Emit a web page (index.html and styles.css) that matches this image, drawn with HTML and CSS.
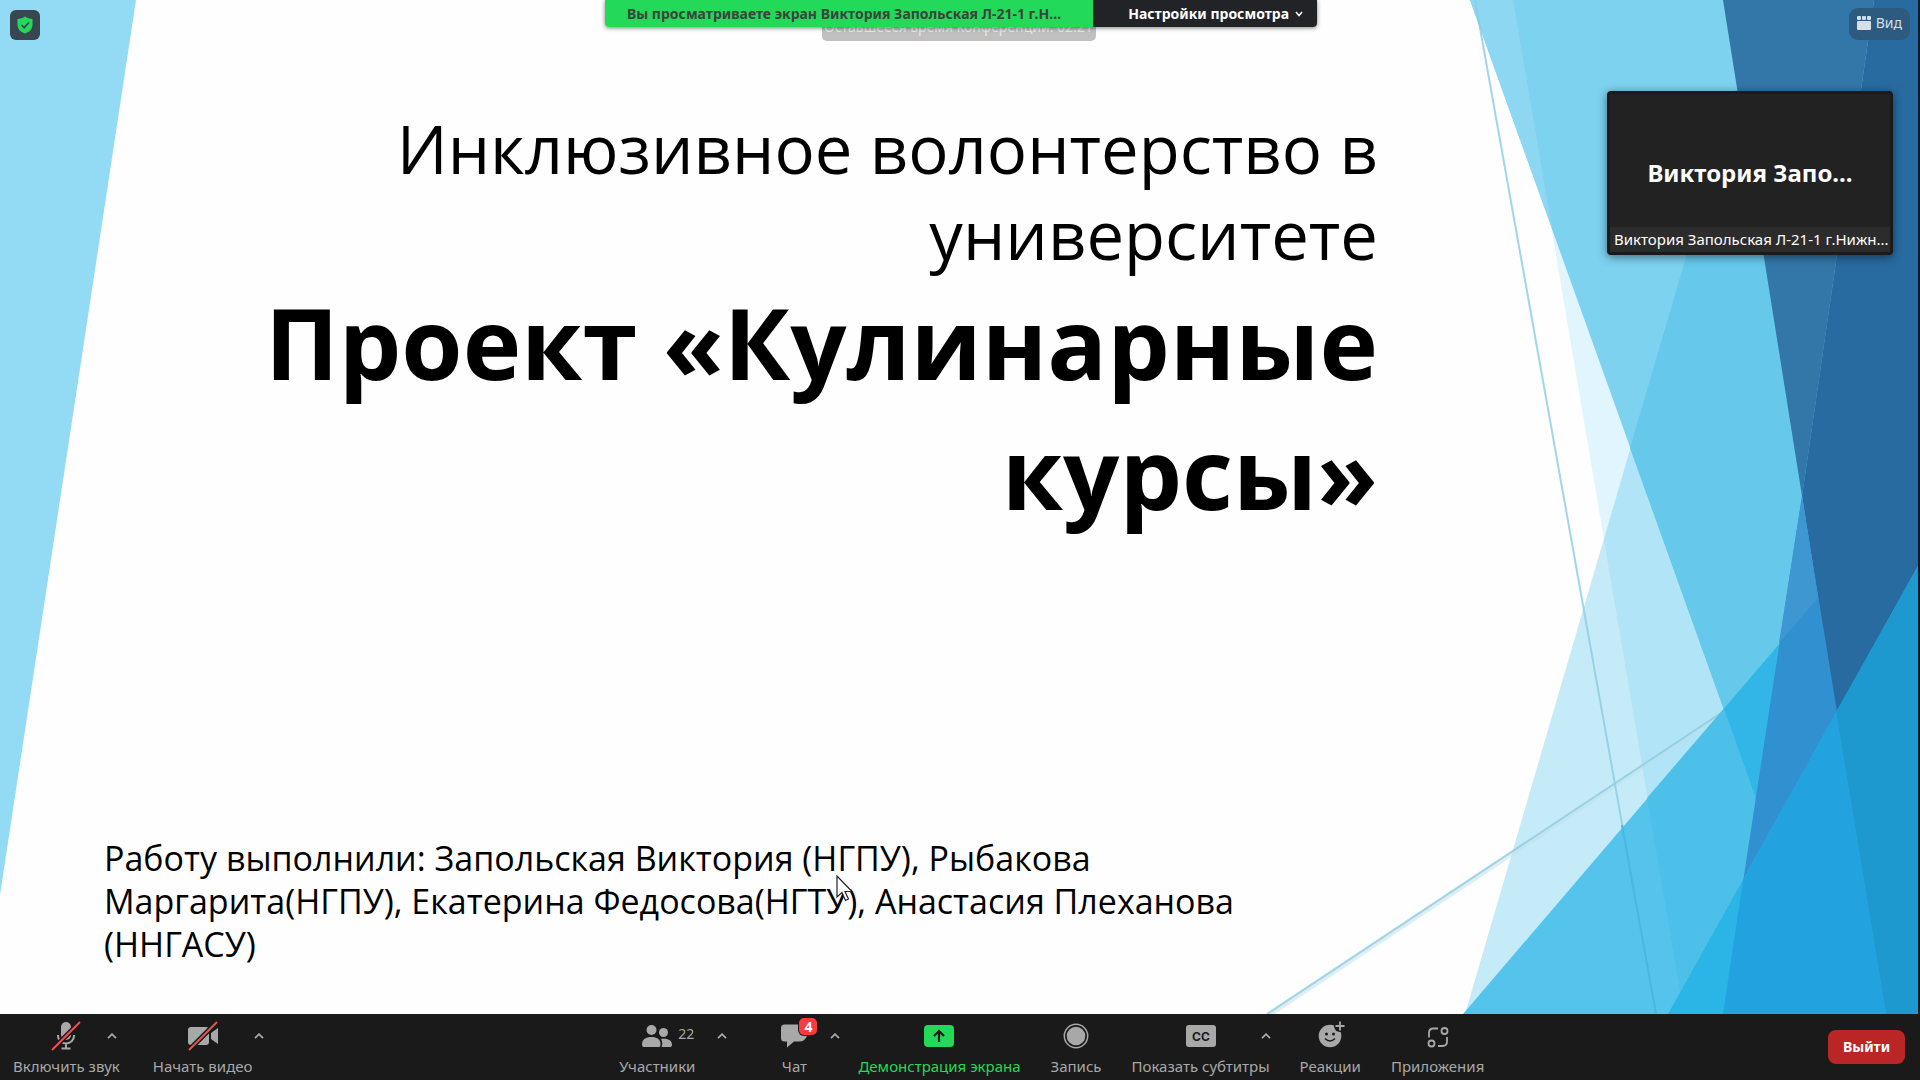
FILE: index.html
```
<!DOCTYPE html>
<html lang="ru">
<head>
  <meta charset="UTF-8">
  <title>Zoom Конференция</title>
  <link rel="stylesheet" href="styles.css">
</head>
<body>
  <main class="stage">
    <svg class="facets" viewBox="0 0 1920 1014" preserveAspectRatio="none" aria-hidden="true">
      <polygon fill="#93daf4" points="0,0 136,0 0,895"/>
      <polygon fill="#e0f5fd" points="1513,0 1684,1014 1918,1014 1918,0"/>
      <polygon fill="#c6ebf8" points="1735,90 1465,1014 1918,1014 1918,90"/>
      <polygon fill="#b0e4f6" points="1735,90 1604,540 1684,1014 1918,1014 1918,90"/>
      <polygon fill="#7dd2f0" points="1470,0 1833,1014 1918,1014 1918,0"/>
      <polygon fill="#8dd7f3" points="1470,0 1513,0 1552,228"/>
      <polygon fill="#66c9ec" points="1735,90 1630,448 1833,1014 1918,1014 1918,90"/>
      <path stroke="#bfe0ec" stroke-width="4" opacity="0.5" d="M1268 1016L1723 714"/>
      <path stroke="#8ccde2" stroke-width="2" opacity="0.8" d="M1267 1014L1721 713M1475 0L1656 1014"/>
      <polygon fill="#54c4ec" points="1463,1014 1817,600 1918,600 1918,1014"/>
      <polygon fill="#4dc0ea" points="1647,798 1817,600 1918,600 1918,1014 1684,1014"/>
      <polygon fill="#32b6e7" points="1724,709 1817,600 1918,600 1918,1014 1833,1014"/>
      <path stroke="#48b8e0" stroke-width="2" d="M1622 825L1656 1014"/>
      <polygon fill="#3277a8" points="1723,0 1802,496 1874,0"/>
      <polygon fill="#286ba0" points="1874,0 1802,496 1836,712 1918,712 1918,0"/>
      <polygon fill="#3190d0" points="1802,496 1837,712 1743,882"/>
      <polygon fill="#3f97d1" points="1802,496 1818,598 1779,643"/>
      <polygon fill="#2bb5e7" points="1918,566 1668,1014 1918,1014"/>
      <polygon fill="#22a3df" points="1743,880 1836,712 1886,1014 1723,1014"/>
      <polygon fill="#1d99cf" points="1836,712 1918,566 1918,1014 1886,1014"/>
      <rect fill="#0d1a2c" x="1918" width="2" height="1014"/>
    </svg>

    <article class="slide">
      <h1 class="slide-title">
        <span class="topic">Инклюзивное волонтерство в<br>университете</span>
        <strong class="project">Проект «Кулинарные<br>курсы»</strong>
      </h1>
      <p class="authors">Работу выполнили: Запольская Виктория (НГПУ), Рыбакова<br>Маргарита(НГПУ), Екатерина Федосова(НГТУ), Анастасия Плеханова<br>(ННГАСУ)</p>
    </article>

    <button class="shield" type="button" aria-label="Сведения о безопасности">
      <svg width="16" height="18" viewBox="0 0 16 18"><path fill="#23d959" d="M8 0.5C10 2 12.500 2.800 15.500 3V8.500C15.500 13 12.500 16 8 17.500C3.500 16 0.500 13 0.500 8.500V3C3.500 2.800 6 2 8 0.500Z"/><path fill="none" stroke="#38474f" stroke-width="1.700" d="M4.500 9L7.200 11.700L12 6.500"/></svg>
    </button>

    <div class="timer">Оставшееся время конференции: 02:21</div>
    <div class="share-bar">
      <span class="share-name">Вы просматриваете экран Виктория Запольская Л-21-1 г.Н...</span>
      <button class="share-options" type="button">Настройки просмотра
        <svg width="8" height="6" viewBox="0 0 8 6"><path fill="none" stroke="#fff" stroke-width="1.500" d="M1 1L4 4.500L7 1"/></svg>
      </button>
    </div>

    <button class="view-button" type="button">
      <svg width="14" height="14" viewBox="0 0 14 14" fill="#d5dfe7"><rect width="4" height="4" rx="1"/><rect x="5" width="4" height="4" rx="1"/><rect x="10" width="4" height="4" rx="1"/><rect y="5" width="14" height="9" rx="1"/></svg>
      Вид
    </button>

    <section class="video-tile">
      <div class="video-name">Виктория Запо...</div>
      <div class="video-label">Виктория Запольская Л-21-1 г.Нижн...</div>
    </section>

    <svg class="cursor" width="18" height="27" viewBox="0 0 18 27"><path fill="#fff" stroke="#222" stroke-width="1.200" d="M1 1V22L6 17.500L9.500 25.500L12.500 24L9 16.500H16Z"/></svg>
  </main>

  <footer class="toolbar">
    <div class="tools tools-left">
      <div class="tool">
        <button class="tool-button" type="button">
          <svg width="30" height="30" viewBox="0 0 30 30"><rect x="10" y="1" width="10" height="18" rx="5" fill="#a8a8a8"/><path fill="none" stroke="#a8a8a8" stroke-width="2" d="M7 14V15a8 7.500 0 0 0 16 0V14M15 22.500V27M10.500 27.500H19.500"/><path stroke="#1a1a1a" stroke-width="5" d="M1 29L29 1"/><path stroke="#f0504f" stroke-width="2" d="M1 29L29 1"/></svg>
          <span>Включить звук</span>
        </button>
        <button class="arrow arrow-audio" type="button" aria-label="Параметры звука"><svg width="10" height="6" viewBox="0 0 10 6"><path d="M1 5.200L5 1.200L9 5.200"/></svg></button>
      </div>
      <div class="tool">
        <button class="tool-button" type="button">
          <svg width="30" height="30" viewBox="0 0 30 30"><rect y="6" width="21" height="18" rx="3" fill="#a8a8a8"/><path fill="#a8a8a8" d="M23 12L30 7V23L23 18Z"/><path stroke="#1a1a1a" stroke-width="5" d="M1 29L29 1"/><path stroke="#f0504f" stroke-width="2" d="M1 29L29 1"/></svg>
          <span>Начать видео</span>
        </button>
        <button class="arrow arrow-video" type="button" aria-label="Параметры видео"><svg width="10" height="6" viewBox="0 0 10 6"><path d="M1 5.200L5 1.200L9 5.200"/></svg></button>
      </div>
    </div>

    <div class="tools">
      <div class="tool tool-people">
        <button class="tool-button" type="button">
          <svg width="30" height="30" viewBox="0 0 30 30" fill="#a8a8a8"><circle cx="9.500" cy="9" r="5"/><circle cx="21.500" cy="11.500" r="4.500"/><path d="M0 23.500C0 18 4 16 9.500 16S18.500 18 18.500 23.500C18.500 25.500 17.500 26 16.500 26H2C1 26 0 25.500 0 23.500Z"/><path d="M19 18C26 17 30 19.500 30 23.500C30 25.500 29 26 28 26H19.500C20.700 24 20.500 20.500 19 18Z"/></svg>
          <span>Участники</span>
        </button>
        <span class="count">22</span>
        <button class="arrow arrow-people" type="button" aria-label="Параметры участников"><svg width="10" height="6" viewBox="0 0 10 6"><path d="M1 5.200L5 1.200L9 5.200"/></svg></button>
      </div>
      <div class="tool tool-chat">
        <button class="tool-button" type="button">
          <svg width="26" height="30" viewBox="0 0 26 30"><path fill="#a8a8a8" d="M3.500 3.500H22.500Q26 3.500 26 7V15Q24 20.500 18 20.500H13L6 26.500V20.500H3.500Q0 20.500 0 17V7Q0 3.500 3.500 3.500Z"/></svg>
          <span>Чат</span>
        </button>
        <span class="badge">4</span>
        <button class="arrow arrow-chat" type="button" aria-label="Параметры чата"><svg width="10" height="6" viewBox="0 0 10 6"><path d="M1 5.200L5 1.200L9 5.200"/></svg></button>
      </div>
      <div class="tool">
        <button class="tool-button tool-share" type="button">
          <svg width="30" height="30" viewBox="0 0 30 30"><rect y="4" width="30" height="22" rx="4" fill="#23d959"/><path fill="none" stroke="#1a1a1a" stroke-width="2.200" d="M15 21V10.500M10 15L15 10L20 15"/></svg>
          <span>Демонстрация экрана</span>
        </button>
      </div>
      <div class="tool">
        <button class="tool-button" type="button">
          <svg width="30" height="30" viewBox="0 0 30 30"><circle cx="15" cy="15" r="11.700" fill="none" stroke="#a8a8a8" stroke-width="1.500"/><circle cx="15" cy="15" r="9.300" fill="#a8a8a8"/></svg>
          <span>Запись</span>
        </button>
      </div>
      <div class="tool">
        <button class="tool-button" type="button">
          <svg width="30" height="30" viewBox="0 0 30 30"><rect y="4" width="30" height="22" rx="3" fill="#a8a8a8"/><text class="cc" x="15" y="20" text-anchor="middle">CC</text></svg>
          <span>Показать субтитры</span>
        </button>
        <button class="arrow arrow-captions" type="button" aria-label="Параметры субтитров"><svg width="10" height="6" viewBox="0 0 10 6"><path d="M1 5.200L5 1.200L9 5.200"/></svg></button>
      </div>
      <div class="tool">
        <button class="tool-button" type="button">
          <svg width="30" height="30" viewBox="0 0 30 30"><circle cx="15" cy="15" r="11.300" fill="#a8a8a8"/><circle cx="25" cy="5" r="6" fill="#1a1a1a"/><path stroke="#a8a8a8" stroke-width="1.800" d="M25 0.500V9.500M20.500 5H29.500"/><circle cx="11.500" cy="13" r="1.500" fill="#1a1a1a"/><circle cx="18.500" cy="13" r="1.500" fill="#1a1a1a"/><path fill="none" stroke="#1a1a1a" stroke-width="1.500" d="M10 17.500Q15 22.500 20 17.500"/></svg>
          <span>Реакции</span>
        </button>
      </div>
      <div class="tool">
        <button class="tool-button" type="button">
          <svg width="30" height="30" viewBox="0 0 30 30" fill="none" stroke="#a8a8a8" stroke-width="1.800"><circle cx="21.500" cy="10" r="3"/><circle cx="8.500" cy="22.500" r="3"/><path d="M15 7.500H10.500Q6 7.500 6 12V16.500M24 16V20.500Q24 25 19.500 25H15"/></svg>
          <span>Приложения</span>
        </button>
      </div>
    </div>

    <button class="leave" type="button">Выйти</button>
  </footer>
</body>
</html>
```
FILE: styles.css
```
* {
  box-sizing: border-box;
}
body {
  margin: 0;
  height: 100vh;
  display: flex;
  flex-direction: column;
  overflow: hidden;
  background: #1a1a1a;
  font-family: "Noto Sans", "Open Sans", sans-serif;
  font-size: 14px;
}
button {
  border: none;
  padding: 0;
  background: none;
  font: inherit;
  color: inherit;
  cursor: pointer;
}
svg {
  display: block;
}

/* shared screen */
.stage {
  position: relative;
  flex: 1;
  min-height: 0;
  background: #fefefe;
}
.facets {
  position: absolute;
  width: 100%;
  height: 100%;
}
.slide {
  position: relative;
  height: 100%;
  display: flex;
  flex-direction: column;
  justify-content: space-between;
  padding: 105px 0 48px 104px;
  color: #000;
  font-family: "Open Sans", "Noto Sans", sans-serif;
}
.slide-title {
  margin: 0;
  width: 1274px;
  text-align: right;
  font-weight: 400;
}
.topic {
  display: block;
  font-size: 67px;
  line-height: 86px;
}
.project {
  display: block;
  font-size: 99px;
  line-height: 130px;
}
.authors {
  margin: 0;
  font-size: 34px;
  line-height: 43px;
  white-space: nowrap;
}
.cursor {
  position: absolute;
  left: 836px;
  top: 875px;
}

/* things floating over the slide */
.shield {
  position: absolute;
  left: 10px;
  top: 10px;
  width: 30px;
  height: 30px;
  display: grid;
  place-items: center;
  border-radius: 6px;
  background: #38474f;
}
.timer {
  position: absolute;
  top: 0;
  left: 822px;
  padding: 17px 3px 4px 2px;
  border-radius: 0 0 5px 5px;
  background: #c0c0c0;
  color: #e8e8e8;
  line-height: 20px;
  white-space: nowrap;
}
.share-bar {
  position: absolute;
  top: 0;
  left: 605px;
  display: flex;
  height: 27px;
  border-radius: 0 0 4px 4px;
  overflow: hidden;
  box-shadow: 0 1px 4px rgba(0,0,0,0.5);
  font-weight: 700;
  line-height: 27px;
  white-space: nowrap;
}
.share-name {
  padding: 0 32px 0 22px;
  background: #23d959;
  color: #39443c;
}
.share-options {
  display: flex;
  align-items: center;
  gap: 6px;
  padding: 0 14px 0 35px;
  background: #222326;
  color: #fff;
}
.view-button {
  position: absolute;
  top: 8px;
  right: 10px;
  display: flex;
  align-items: center;
  gap: 5px;
  height: 32px;
  padding: 0 8px 3px;
  border-radius: 9px;
  background: #2d5b80;
  color: #d5dfe7;
}
.video-tile {
  position: absolute;
  top: 91px;
  right: 27px;
  width: 286px;
  height: 164px;
  display: flex;
  flex-direction: column;
  border: 3px solid #1a1a1a;
  border-radius: 4px;
  background: #222;
  box-shadow: 0 2px 10px rgba(0,0,0,0.5);
  color: #fff;
}
.video-name {
  flex: 1;
  padding-top: 63px;
  font-size: 24px;
  font-weight: 700;
  line-height: 32px;
  text-align: center;
}
.video-label {
  padding-left: 4px;
  background: #2c2c2c;
  font-size: 15px;
  line-height: 25px;
  white-space: nowrap;
}

/* bottom panel */
.toolbar {
  display: flex;
  justify-content: space-between;
  align-items: center;
  height: 66px;
  padding: 0 15px 0 13px;
  color: #a8a8a8;
}
.tools {
  display: flex;
  gap: 30px;
}
.tools-left {
  gap: 33px;
  padding-right: 23px;
}
.tool {
  position: relative;
}
.tool-button {
  display: flex;
  flex-direction: column;
  align-items: center;
  width: 100%;
  height: 66px;
  padding-top: 7px;
  gap: 5px;
  font-size: 15px;
  line-height: 20px;
  white-space: nowrap;
}
.tool-people {
  margin-right: 35px;
}
.tool-chat {
  width: 68px;
}
.tool-share {
  color: #23d959;
}
.arrow {
  position: absolute;
  top: 15px;
  width: 16px;
  height: 14px;
  display: grid;
  place-items: center;
}
.arrow path {
  fill: none;
  stroke: #a8a8a8;
  stroke-width: 1.8;
}
.arrow-audio {
  right: 0;
}
.arrow-video {
  right: -15px;
}
.arrow-people {
  right: -35px;
}
.arrow-chat {
  right: -15px;
}
.arrow-captions {
  right: -4px;
}
.count {
  position: absolute;
  left: 59px;
  top: 10px;
  line-height: 20px;
}
.badge {
  position: absolute;
  left: 39px;
  top: 4px;
  width: 18px;
  height: 17px;
  border-radius: 5px;
  background: #fb3b3b;
  box-shadow: 0 0 0 1px #1a1a1a;
  color: #fff;
  font-size: 14px;
  font-weight: 700;
  line-height: 17px;
  text-align: center;
}
.cc {
  font-family: Inter, "Liberation Sans", sans-serif;
  font-size: 12px;
  font-weight: 700;
  fill: #1a1a1a;
}
.leave {
  width: 77px;
  height: 34px;
  padding-bottom: 2px;
  border-radius: 8px;
  background: #b92625;
  color: #fff;
  font-weight: 700;
}
```
